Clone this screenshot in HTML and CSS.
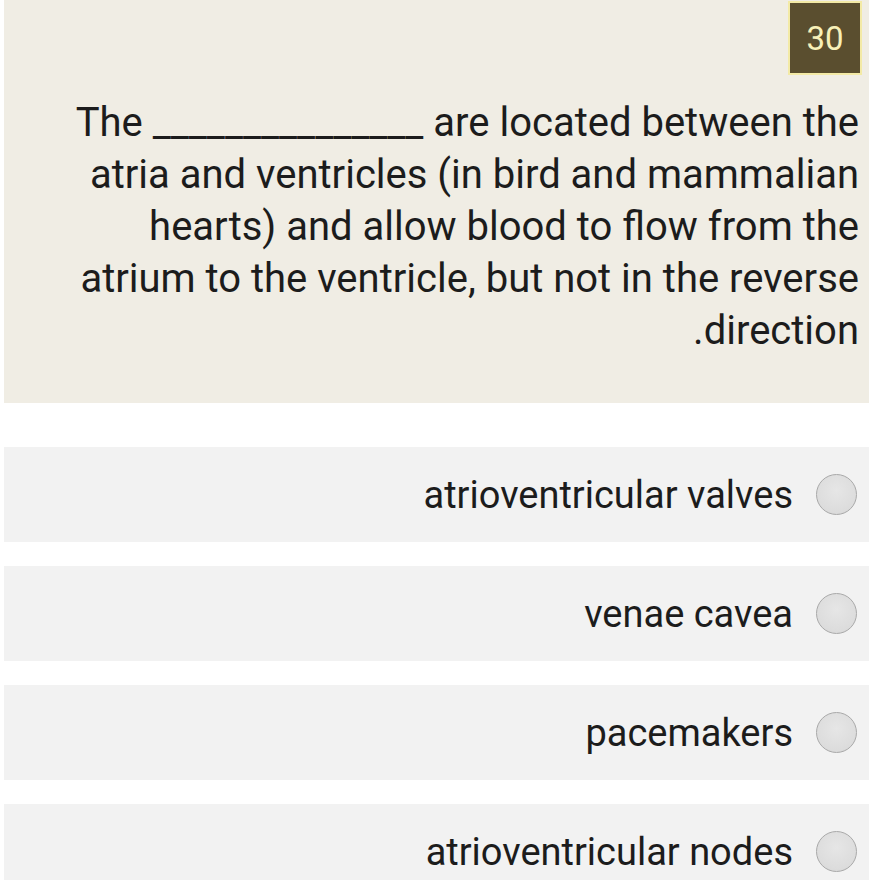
FILE: index.html
```html
<!DOCTYPE html>
<html>
<head>
<meta charset="utf-8">
<link rel="stylesheet" href="styles.css">
</head>
<body>
<div class="page">
  <div class="question">
    <div class="badge-row"><span class="badge">30</span></div>
    <p class="qtext">The _______________ are located between the atria and ventricles (in bird and mammalian hearts) and allow blood to flow from the atrium to the ventricle, but not in the reverse direction.</p>
  </div>
  <div class="options">
    <label class="option"><span class="radio"></span><span class="label">atrioventricular valves</span></label>
    <label class="option"><span class="radio"></span><span class="label">venae cavea</span></label>
    <label class="option"><span class="radio"></span><span class="label">pacemakers</span></label>
    <label class="option"><span class="radio"></span><span class="label">atrioventricular nodes</span></label>
  </div>
</div>
</body>
</html>
```
FILE: styles.css
```css
html, body {
  margin: 0;
  padding: 0;
  background: #ffffff;
}
body {
  font-family: Roboto, "Liberation Sans", sans-serif;
  color: #1c1c1c;
}
.page {
  padding-left: 4px;
  direction: rtl;
}
.question {
  background: #f0ede4;
  height: 403px;
  box-sizing: border-box;
  padding: 0 7px 0 60px;
}
.badge-row {
  display: flex;
  justify-content: flex-start;
}
.badge {
  display: flex;
  align-items: center;
  justify-content: center;
  width: 70px;
  height: 70px;
  background: #5a4e2f;
  border: 2px solid #f3eaa6;
  color: #f7f0b8;
  font-size: 33px;
  margin-top: 1px;
}
.qtext {
  margin: 22px 0 0 0;
  font-size: 40px;
  line-height: 52px;
  text-align: right;
  padding-right: 3px;
}
.options {
  display: flex;
  flex-direction: column;
  gap: 24px;
  margin-top: 44px;
}
.option {
  display: flex;
  align-items: center;
  height: 95px;
  background: #f2f2f2;
  padding-right: 12px;
  gap: 23px;
}
.label {
  font-size: 38px;
}
.radio {
  width: 39px;
  height: 39px;
  border-radius: 50%;
  border: 1px solid #a9a9a9;
  background: radial-gradient(circle at 50% 40%, #e6e6e6 0%, #dcdcdc 70%, #d2d2d2 100%);
  flex: none;
}
```
